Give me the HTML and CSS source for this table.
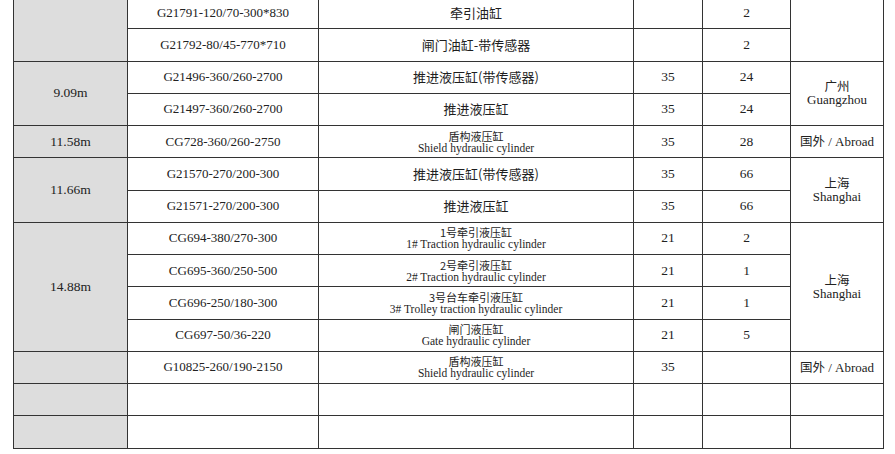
FILE: index.html
```html
<!DOCTYPE html>
<html lang="zh-CN">
<head>
<meta charset="utf-8">
<title>液压缸</title>
<link rel="stylesheet" href="styles.css">
</head>
<body>
<table class="spec">
  <colgroup>
    <col class="c-len"><col class="c-model"><col class="c-name"><col class="c-mpa"><col class="c-qty"><col class="c-dest">
  </colgroup>
  <tbody>
    <tr>
      <td class="len" rowspan="2"></td>
      <td class="model">G21791-120/70-300*830</td>
      <td class="name">牵引油缸</td>
      <td class="num"></td>
      <td class="num">2</td>
      <td class="dest" rowspan="2"></td>
    </tr>
    <tr>
      <td class="model">G21792-80/45-770*710</td>
      <td class="name">闸门油缸-带传感器</td>
      <td class="num"></td>
      <td class="num">2</td>
    </tr>
    <tr>
      <td class="len" rowspan="2">9.09m</td>
      <td class="model">G21496-360/260-2700</td>
      <td class="name">推进液压缸(带传感器)</td>
      <td class="num">35</td>
      <td class="num">24</td>
      <td class="dest" rowspan="2"><span class="zh">广州</span><span class="en">Guangzhou</span></td>
    </tr>
    <tr>
      <td class="model">G21497-360/260-2700</td>
      <td class="name">推进液压缸</td>
      <td class="num">35</td>
      <td class="num">24</td>
    </tr>
    <tr>
      <td class="len">11.58m</td>
      <td class="model">CG728-360/260-2750</td>
      <td class="name two"><span class="zh">盾构液压缸</span><span class="en">Shield hydraulic cylinder</span></td>
      <td class="num">35</td>
      <td class="num">28</td>
      <td class="dest"><span class="inline-zh">国外</span> / Abroad</td>
    </tr>
    <tr>
      <td class="len" rowspan="2">11.66m</td>
      <td class="model">G21570-270/200-300</td>
      <td class="name">推进液压缸(带传感器)</td>
      <td class="num">35</td>
      <td class="num">66</td>
      <td class="dest" rowspan="2"><span class="zh">上海</span><span class="en">Shanghai</span></td>
    </tr>
    <tr>
      <td class="model">G21571-270/200-300</td>
      <td class="name">推进液压缸</td>
      <td class="num">35</td>
      <td class="num">66</td>
    </tr>
    <tr>
      <td class="len" rowspan="4">14.88m</td>
      <td class="model">CG694-380/270-300</td>
      <td class="name two"><span class="zh">1号牵引液压缸</span><span class="en">1# Traction hydraulic cylinder</span></td>
      <td class="num">21</td>
      <td class="num">2</td>
      <td class="dest" rowspan="4"><span class="zh">上海</span><span class="en">Shanghai</span></td>
    </tr>
    <tr>
      <td class="model">CG695-360/250-500</td>
      <td class="name two"><span class="zh">2号牵引液压缸</span><span class="en">2# Traction hydraulic cylinder</span></td>
      <td class="num">21</td>
      <td class="num">1</td>
    </tr>
    <tr>
      <td class="model">CG696-250/180-300</td>
      <td class="name two"><span class="zh">3号台车牵引液压缸</span><span class="en">3# Trolley traction hydraulic cylinder</span></td>
      <td class="num">21</td>
      <td class="num">1</td>
    </tr>
    <tr>
      <td class="model">CG697-50/36-220</td>
      <td class="name two"><span class="zh">闸门液压缸</span><span class="en">Gate hydraulic cylinder</span></td>
      <td class="num">21</td>
      <td class="num">5</td>
    </tr>
    <tr>
      <td class="len"></td>
      <td class="model">G10825-260/190-2150</td>
      <td class="name two"><span class="zh">盾构液压缸</span><span class="en">Shield hydraulic cylinder</span></td>
      <td class="num">35</td>
      <td class="num"></td>
      <td class="dest"><span class="inline-zh">国外</span> / Abroad</td>
    </tr>
    <tr>
      <td class="len"></td>
      <td class="model"></td>
      <td class="name"></td>
      <td class="num"></td>
      <td class="num"></td>
      <td class="dest"></td>
    </tr>
    <tr>
      <td class="len"></td>
      <td class="model"></td>
      <td class="name"></td>
      <td class="num"></td>
      <td class="num"></td>
      <td class="dest"></td>
    </tr>
  </tbody>
</table>
</body>
</html>
```

FILE: styles.css
```css
html, body {
  margin: 0;
  padding: 0;
  background: #ffffff;
}

.spec {
  margin: -4px 0 0 13px;
  width: 870px;
  table-layout: fixed;
  border-collapse: collapse;
  font-family: "Liberation Serif", "Times New Roman", serif;
  font-size: 13.5px;
  color: #222222;
}

.c-len { width: 114px; }
.c-model { width: 191px; }
.c-name { width: 315px; }
.c-mpa { width: 69px; }
.c-qty { width: 88px; }
.c-dest { width: 93px; }

.spec td {
  border: 1px solid #333333;
  height: 31.25px;
  padding: 0;
  text-align: center;
  vertical-align: middle;
  line-height: 14px;
  white-space: nowrap;
  font-family: "Liberation Serif", "Times New Roman", serif;
}

.spec td.len {
  background: #dddddd;
}

.spec td.model {
  font-size: 13px;
}

.spec td.name {
  font-family: "Noto Sans CJK SC", sans-serif;
  font-size: 13px;
  color: #1e1e1e;
}

.spec td.name.two {
  line-height: 12px;
}

.name.two .zh {
  display: block;
  font-family: "Noto Sans CJK SC", sans-serif;
  font-size: 11px;
}

.name.two .en {
  display: block;
  font-family: "Liberation Serif", "Times New Roman", serif;
  font-size: 11.5px;
}

.spec td.dest {
  font-size: 13px;
  line-height: 14px;
}

.dest .zh {
  display: block;
  font-family: "Noto Sans CJK SC", sans-serif;
  font-size: 12.5px;
}

.dest .en {
  display: block;
  font-family: "Liberation Serif", "Times New Roman", serif;
}

.inline-zh {
  font-family: "Noto Sans CJK SC", sans-serif;
  font-size: 12.5px;
}
```
